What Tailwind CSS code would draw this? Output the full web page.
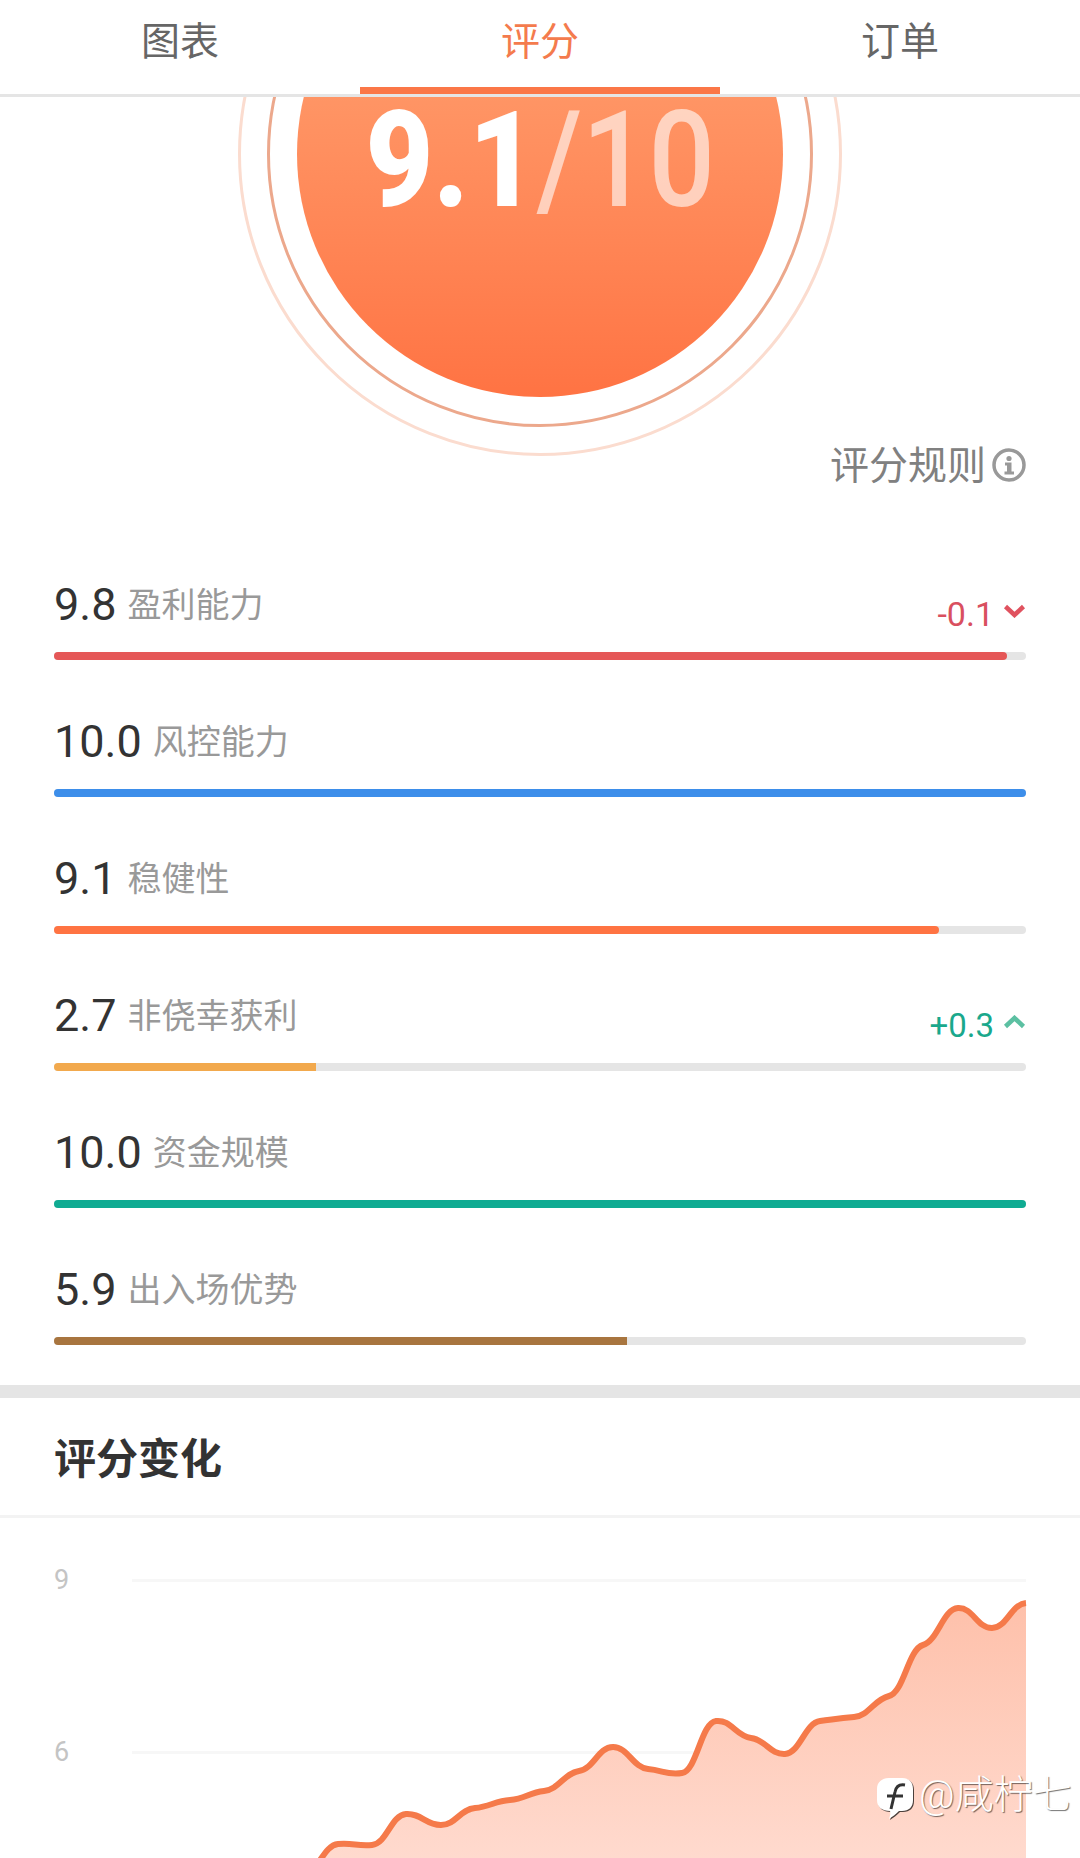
<!doctype html>
<html lang="zh">
<head>
<meta charset="UTF-8">
<title>评分</title>
<script src="https://cdn.jsdelivr.net/npm/@tailwindcss/browser@4"></script>
</head>
<body class="bg-white">
<div class="relative w-[1080px] h-[1858px] overflow-hidden bg-white font-['Roboto','Noto_Sans_CJK_SC',sans-serif]">

  <!-- tabs -->
  <div class="relative z-10 flex h-[97px] bg-white border-b-[3px] border-[#e5e5e5] text-[39px] text-[#666]">
    <div class="flex-1 flex items-center justify-center pb-[10px]">图表</div>
    <div class="relative flex-1 flex items-center justify-center pb-[10px] text-[#f47b4d]">评分
      <div class="absolute left-0 right-0 bottom-0 h-[7px] bg-[#fb7747]"></div>
    </div>
    <div class="flex-1 flex items-center justify-center pb-[10px]">订单</div>
  </div>

  <!-- score circle, its top slides under the tabs -->
  <div class="relative flow-root h-[426px]">
    <div class="flex justify-center -mt-[245px]">
      <div class="flex items-center justify-center w-[604px] h-[604px] rounded-full border-[3px] border-[#fbdccf]">
        <div class="flex items-center justify-center w-[546px] h-[546px] rounded-full border-[3px] border-[#eca88c]">
          <div class="flex flex-col items-center w-[486px] h-[486px] rounded-full bg-gradient-to-b from-[#ffa878] to-[#ff7343]">
            <div class="mt-[194px] scale-x-[0.873] text-[134px] leading-[112px] font-black text-white whitespace-nowrap">9.1<span class="font-medium text-white/60">/10</span></div>
          </div>
        </div>
      </div>
    </div>
    <div class="absolute right-[54px] top-[344px] flex items-center gap-[6px] text-[39px] leading-[50px] text-[#808080]">
      评分规则
      <svg width="34" height="34" viewBox="0 0 34 34" class="mb-[2px]">
        <circle cx="17" cy="17" r="15" fill="none" stroke="#999" stroke-width="3.500"/>
        <circle cx="17" cy="10.500" r="2.600" fill="#999"/>
        <path d="M13 14.500h6.500v9h2.500v3h-9.500v-3h2.500v-6h-2z" fill="#999"/>
      </svg>
    </div>
  </div>

  <!-- score rows -->
  <div class="px-[54px] pb-[40px]">
    <div class="h-[137px] flex flex-col justify-end">
      <div class="flex justify-between items-end">
        <div class="flex items-center gap-[11px] mb-[20px]"><span class="text-[45px] leading-[54px] text-[#333]">9.8</span><span class="text-[34px] text-[#999]">盈利能力</span></div>
        <div class="flex items-center gap-[9px] mb-[16px] text-[34px] leading-[44px] text-[#d9505f]">-0.1
          <svg width="23" height="14" viewBox="0 0 23 14" class="mb-[6px]"><path d="M2.500 2.500l9 8.500 9-8.500" fill="none" stroke="#e0525f" stroke-width="4.500"/></svg>
        </div>
      </div>
      <div class="h-[8px] rounded-full bg-[#e5e5e5]"><div class="h-full w-[98%] rounded-full bg-[#e55757]"></div></div>
    </div>

    <div class="h-[137px] flex flex-col justify-end">
      <div class="flex justify-between items-end">
        <div class="flex items-center gap-[11px] mb-[20px]"><span class="text-[45px] leading-[54px] text-[#333]">10.0</span><span class="text-[34px] text-[#999]">风控能力</span></div>
      </div>
      <div class="h-[8px] rounded-full bg-[#e5e5e5]"><div class="h-full w-full rounded-full bg-[#3d8eea]"></div></div>
    </div>

    <div class="h-[137px] flex flex-col justify-end">
      <div class="flex justify-between items-end">
        <div class="flex items-center gap-[11px] mb-[20px]"><span class="text-[45px] leading-[54px] text-[#333]">9.1</span><span class="text-[34px] text-[#999]">稳健性</span></div>
      </div>
      <div class="h-[8px] rounded-full bg-[#e5e5e5]"><div class="h-full w-[91%] rounded-full bg-[#ff7342]"></div></div>
    </div>

    <div class="h-[137px] flex flex-col justify-end">
      <div class="flex justify-between items-end">
        <div class="flex items-center gap-[11px] mb-[20px]"><span class="text-[45px] leading-[54px] text-[#333]">2.7</span><span class="text-[34px] text-[#999]">非侥幸获利</span></div>
        <div class="flex items-center gap-[9px] mb-[15px] text-[33px] leading-[44px] text-[#1aa88c]">+0.3
          <svg width="23" height="14" viewBox="0 0 23 14" class="mb-[8px]"><path d="M2.500 11.500l9-8.500 9 8.500" fill="none" stroke="#5cc0a2" stroke-width="4.500"/></svg>
        </div>
      </div>
      <div class="h-[8px] rounded-full bg-[#e5e5e5]"><div class="h-full w-[27%] rounded-l-full bg-[#f2a94d]"></div></div>
    </div>

    <div class="h-[137px] flex flex-col justify-end">
      <div class="flex justify-between items-end">
        <div class="flex items-center gap-[11px] mb-[20px]"><span class="text-[45px] leading-[54px] text-[#333]">10.0</span><span class="text-[34px] text-[#999]">资金规模</span></div>
      </div>
      <div class="h-[8px] rounded-full bg-[#e5e5e5]"><div class="h-full w-full rounded-full bg-[#0fab92]"></div></div>
    </div>

    <div class="h-[137px] flex flex-col justify-end">
      <div class="flex justify-between items-end">
        <div class="flex items-center gap-[11px] mb-[20px]"><span class="text-[45px] leading-[54px] text-[#333]">5.9</span><span class="text-[34px] text-[#999]">出入场优势</span></div>
      </div>
      <div class="h-[8px] rounded-full bg-[#e5e5e5]"><div class="h-full w-[59%] rounded-l-full bg-[#a8753f]"></div></div>
    </div>
  </div>

  <div class="h-[13px] bg-[#e5e5e5]"></div>

  <!-- chart -->
  <div class="flex items-center h-[120px] pt-[5px] px-[54px] border-b-[3px] border-[#f3f3f3] text-[42px] font-bold text-[#333]">评分变化</div>
  <svg width="1080" height="340" viewBox="0 1518 1080 340" class="block">
    <defs>
      <linearGradient id="area" x1="0" y1="1600" x2="0" y2="1858" gradientUnits="userSpaceOnUse">
        <stop offset="0" stop-color="#fec0aa"/>
        <stop offset="1" stop-color="#ffdace"/>
      </linearGradient>
    </defs>
    <text x="54" y="1589" class="text-[27px] fill-[#c4c4c4]">9</text>
    <text x="54" y="1761" class="text-[27px] fill-[#c4c4c4]">6</text>
    <line x1="132" x2="1026" y1="1580.500" y2="1580.500" stroke="#f7f7f7" stroke-width="3"/>
    <line x1="132" x2="1026" y1="1752.500" y2="1752.500" stroke="#f7f7f7" stroke-width="3"/>
    <path id="fill" fill="url(#area)"/>
    <path id="line" fill="none" stroke="#f57a4a" stroke-width="6"/>
  </svg>

  <!-- watermark -->
  <div class="absolute left-[877px] top-[1776px] flex items-center gap-[5px] text-[39px] leading-[44px] font-light text-white [text-shadow:1px_1px_1px_rgba(0,0,0,0.55)]">
    <svg width="37" height="46" viewBox="0 0 37 46" class="drop-shadow-[1px_1px_0.5px_rgba(0,0,0,0.7)]">
      <path d="M12 2h13c7 0 11 4 11 11v11c0 7-4 11-11 11h-3c-3 3-7 6-10 8 1-3 2-6 1-8-8 0-13-4-13-11v-11c0-7 5-11 12-11z" fill="#fff"/>
      <path d="M28 9c-6-1-9 2-10 7l-4 17M10 20h16" fill="none" stroke="#333" stroke-width="3"/>
    </svg>
    <span class="-mt-[8px]">@咸柠七</span>
  </div>
</div>

<script>
  // score history, sampled every 34.3px along the axis
  const points = [[303,1875],[338,1844],[372,1845],[406,1814],[441,1825],[475,1808],[510,1800],[544,1791],[579,1771],[613,1747],[648,1769],[682,1773],[716,1721],[751,1738],[785,1754],[820,1721],[854,1717],[889,1696],[923,1645],[958,1608],[992,1628],[1026,1603]];
  let d = `M${points[0][0]} ${points[0][1]}`;
  for (let i = 0; i < points.length - 1; i++) {
    const p0 = points[Math.max(i - 1, 0)], p1 = points[i], p2 = points[i + 1], p3 = points[Math.min(i + 2, points.length - 1)];
    const k = 0.05;
    d += ` C${p1[0] + 15} ${p1[1] + (p2[1] - p0[1]) * k} ${p2[0] - 15} ${p2[1] - (p3[1] - p1[1]) * k} ${p2[0]} ${p2[1]}`;
  }
  document.getElementById("line").setAttribute("d", d);
  document.getElementById("fill").setAttribute("d", d + " L1026 1905 L303 1905 Z");
</script>
</body>
</html>
